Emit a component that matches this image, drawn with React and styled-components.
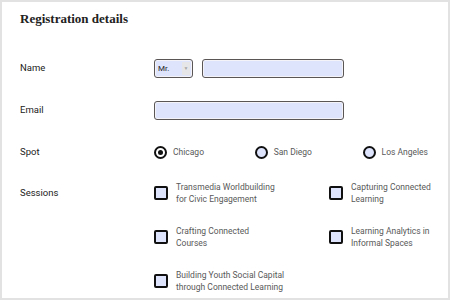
import React from 'react';
import styled, {createGlobalStyle} from 'styled-components';

const GlobalStyle = createGlobalStyle`
  html, body {
    margin: 0;
    padding: 0;
    background: #fff;
  }
  * {
    box-sizing: border-box;
  }
`;

const Card = styled.div`
  width: 450px;
  height: 300px;
  border: 2px solid #e2e2e2;
  padding: 9px 18px 0 18px;
  font-family: Roboto, "Liberation Sans", sans-serif;
  color: #333;
  overflow: hidden;
`;

const Title = styled.h1`
  margin: 0 0 20px 0;
  font-family: "Liberation Serif", "DejaVu Serif", serif;
  font-weight: bold;
  font-size: 13px;
  line-height: 16px;
  color: #222;
`;

const Row = styled.div`
  display: grid;
  grid-template-columns: 134px 1fr;
  align-items: ${p => (p.top ? 'start' : 'center')};
  min-height: 42px;
  padding-top: ${p => (p.top ? '8px' : '0')};
`;

const Label = styled.div`
  font-size: 9.5px;
  font-weight: 400;
  color: #222;
  line-height: 24px;
`;

const Controls = styled.div`
  display: flex;
  align-items: center;
  gap: ${p => p.gap || 0}px;
  justify-content: ${p => p.spread ? 'space-between' : 'flex-start'};
  padding-right: ${p => p.spread ? '2px' : '0'};
`;

const TextInput = styled.div`
  width: ${p => p.width}px;
  height: 19px;
  border: 1.5px solid #5b5656;
  border-radius: 3px;
  background: #dfe4fd;
  box-shadow: inset 0 0 0 1px #f4f4f8;
`;

const Select = styled.div`
  width: 39px;
  height: 19px;
  border: 1.5px solid #5b5656;
  border-radius: 3px;
  background: #dfe4fd;
  box-shadow: inset 0 0 0 1px #f4f4f8;
  display: flex;
  align-items: center;
  justify-content: space-between;
  padding: 2px 2px 2px 3px;
  font-size: 8px;
  color: #222;
`;

const Arrow = styled.span`
  width: 8px;
  height: 13px;
  background: #e6e6e8;
  color: #a8a8a8;
  font-size: 5px;
  display: flex;
  align-items: center;
  justify-content: center;
`;

const Option = styled.label`
  display: flex;
  align-items: center;
  gap: ${p => p.gap}px;
  font-size: 8.5px;
  color: #595959;
`;

const Radio = styled.span`
  width: 13px;
  height: 13px;
  border-radius: 50%;
  border: 2px solid #111;
  background: ${p => (p.checked ? '#fff' : '#dfe4fd')};
  display: flex;
  align-items: center;
  justify-content: center;
  flex-shrink: 0;

  &::after {
    content: '';
    display: ${p => (p.checked ? 'block' : 'none')};
    width: 5px;
    height: 5px;
    border-radius: 50%;
    background: #111;
  }
`;

const Sessions = styled.div`
  display: grid;
  grid-template-columns: 175px 1fr;
  row-gap: 20px;
`;

const Box = styled.span`
  width: 14px;
  height: 14px;
  border: 2px solid #111;
  border-radius: 2px;
  background: #dfe4fd;
  flex-shrink: 0;
`;

const SessionText = styled.span`
  white-space: pre;
  line-height: 12px;
  font-size: 8.5px;
  color: #595959;
`;

const spots = ['Chicago', 'San Diego', 'Los Angeles'];

const sessions = [
  'Transmedia Worldbuilding\nfor Civic Engagement',
  'Capturing Connected\nLearning',
  'Crafting Connected\nCourses',
  'Learning Analytics in\nInformal Spaces',
  'Building Youth Social Capital\nthrough Connected Learning',
];

export default function App() {
  return (
    <Card>
      <GlobalStyle />
      <Title>Registration details</Title>

      <Row>
        <Label>Name</Label>
        <Controls gap={9}>
          <Select>
            Mr.
            <Arrow>▼</Arrow>
          </Select>
          <TextInput width={142} />
        </Controls>
      </Row>

      <Row>
        <Label>Email</Label>
        <Controls>
          <TextInput width={190} />
        </Controls>
      </Row>

      <Row>
        <Label>Spot</Label>
        <Controls spread>
          {spots.map((s, i) => (
            <Option key={s} gap={6}>
              <Radio checked={i === 0} />
              {s}
            </Option>
          ))}
        </Controls>
      </Row>

      <Row top>
        <Label>Sessions</Label>
        <Sessions>
          {sessions.map(s => (
            <Option key={s} gap={8}>
              <Box />
              <SessionText>{s}</SessionText>
            </Option>
          ))}
        </Sessions>
      </Row>
    </Card>
  );
}
